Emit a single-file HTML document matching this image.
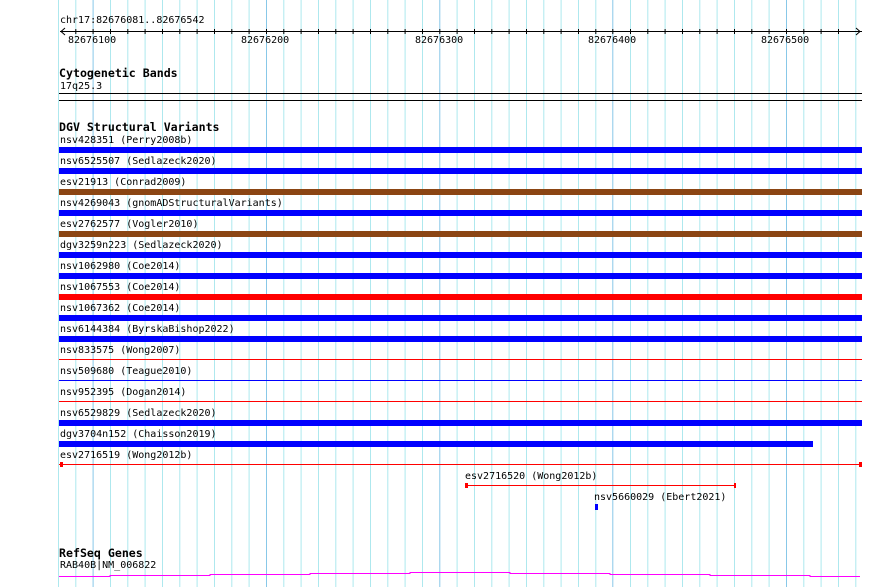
<!DOCTYPE html>
<html><head><meta charset="utf-8"><style>
*{margin:0;padding:0}
body{width:890px;height:587px;overflow:hidden;background:#fff;position:relative;font-family:"DejaVu Sans Mono","Liberation Mono",monospace;font-size:10px;color:#000}
.grid{position:absolute;left:0;top:0;width:890px;height:587px}
.t{position:absolute;white-space:pre;line-height:12px}
.b{position:absolute;font-weight:bold;font-size:11.6px;line-height:13px;white-space:pre}
.bar{position:absolute;left:59px;width:803px;height:6px}
.ln{position:absolute;left:59px;width:803px;height:1px}
</style></head><body>
<svg class="grid" width="890" height="587" style="position:absolute;left:0;top:0">
<g stroke="#aee8ee">
<line x1="58.5" y1="0" x2="58.5" y2="587"/><line x1="75.8" y1="0" x2="75.8" y2="587"/><line x1="110.5" y1="0" x2="110.5" y2="587"/><line x1="127.8" y1="0" x2="127.8" y2="587"/><line x1="145.1" y1="0" x2="145.1" y2="587"/><line x1="162.5" y1="0" x2="162.5" y2="587"/><line x1="179.8" y1="0" x2="179.8" y2="587"/><line x1="197.1" y1="0" x2="197.1" y2="587"/><line x1="214.5" y1="0" x2="214.5" y2="587"/><line x1="231.8" y1="0" x2="231.8" y2="587"/><line x1="249.1" y1="0" x2="249.1" y2="587"/><line x1="283.8" y1="0" x2="283.8" y2="587"/><line x1="301.1" y1="0" x2="301.1" y2="587"/><line x1="318.5" y1="0" x2="318.5" y2="587"/><line x1="335.8" y1="0" x2="335.8" y2="587"/><line x1="353.1" y1="0" x2="353.1" y2="587"/><line x1="370.5" y1="0" x2="370.5" y2="587"/><line x1="387.8" y1="0" x2="387.8" y2="587"/><line x1="405.1" y1="0" x2="405.1" y2="587"/><line x1="422.5" y1="0" x2="422.5" y2="587"/><line x1="457.1" y1="0" x2="457.1" y2="587"/><line x1="474.5" y1="0" x2="474.5" y2="587"/><line x1="491.8" y1="0" x2="491.8" y2="587"/><line x1="509.1" y1="0" x2="509.1" y2="587"/><line x1="526.5" y1="0" x2="526.5" y2="587"/><line x1="543.8" y1="0" x2="543.8" y2="587"/><line x1="561.1" y1="0" x2="561.1" y2="587"/><line x1="578.5" y1="0" x2="578.5" y2="587"/><line x1="595.8" y1="0" x2="595.8" y2="587"/><line x1="630.5" y1="0" x2="630.5" y2="587"/><line x1="647.8" y1="0" x2="647.8" y2="587"/><line x1="665.1" y1="0" x2="665.1" y2="587"/><line x1="682.5" y1="0" x2="682.5" y2="587"/><line x1="699.8" y1="0" x2="699.8" y2="587"/><line x1="717.1" y1="0" x2="717.1" y2="587"/><line x1="734.5" y1="0" x2="734.5" y2="587"/><line x1="751.8" y1="0" x2="751.8" y2="587"/><line x1="769.1" y1="0" x2="769.1" y2="587"/><line x1="803.8" y1="0" x2="803.8" y2="587"/><line x1="821.1" y1="0" x2="821.1" y2="587"/><line x1="838.5" y1="0" x2="838.5" y2="587"/><line x1="855.8" y1="0" x2="855.8" y2="587"/>
</g>
<g stroke="#88c8e8">
<line x1="93.1" y1="0" x2="93.1" y2="587"/><line x1="266.5" y1="0" x2="266.5" y2="587"/><line x1="439.8" y1="0" x2="439.8" y2="587"/><line x1="612.8" y1="0" x2="612.8" y2="587"/><line x1="786.5" y1="0" x2="786.5" y2="587"/>
</g>
<g stroke="#000" stroke-width="1">
<line x1="60" y1="31.5" x2="862" y2="31.5"/>
<polyline points="65,28 61,31.5 65,35" fill="none"/>
<polyline points="856,28 860,31.5 856,35" fill="none"/>
<line x1="75.8" y1="29" x2="75.8" y2="34"/><line x1="93.1" y1="29" x2="93.1" y2="34"/><line x1="110.5" y1="29" x2="110.5" y2="34"/><line x1="127.8" y1="29" x2="127.8" y2="34"/><line x1="145.1" y1="29" x2="145.1" y2="34"/><line x1="162.5" y1="29" x2="162.5" y2="34"/><line x1="179.8" y1="29" x2="179.8" y2="34"/><line x1="197.1" y1="29" x2="197.1" y2="34"/><line x1="214.5" y1="29" x2="214.5" y2="34"/><line x1="231.8" y1="29" x2="231.8" y2="34"/><line x1="249.1" y1="29" x2="249.1" y2="34"/><line x1="266.5" y1="29" x2="266.5" y2="34"/><line x1="283.8" y1="29" x2="283.8" y2="34"/><line x1="301.1" y1="29" x2="301.1" y2="34"/><line x1="318.5" y1="29" x2="318.5" y2="34"/><line x1="335.8" y1="29" x2="335.8" y2="34"/><line x1="353.1" y1="29" x2="353.1" y2="34"/><line x1="370.5" y1="29" x2="370.5" y2="34"/><line x1="387.8" y1="29" x2="387.8" y2="34"/><line x1="405.1" y1="29" x2="405.1" y2="34"/><line x1="422.5" y1="29" x2="422.5" y2="34"/><line x1="439.8" y1="29" x2="439.8" y2="34"/><line x1="457.1" y1="29" x2="457.1" y2="34"/><line x1="474.5" y1="29" x2="474.5" y2="34"/><line x1="491.8" y1="29" x2="491.8" y2="34"/><line x1="509.1" y1="29" x2="509.1" y2="34"/><line x1="526.5" y1="29" x2="526.5" y2="34"/><line x1="543.8" y1="29" x2="543.8" y2="34"/><line x1="561.1" y1="29" x2="561.1" y2="34"/><line x1="578.5" y1="29" x2="578.5" y2="34"/><line x1="595.8" y1="29" x2="595.8" y2="34"/><line x1="612.8" y1="29" x2="612.8" y2="34"/><line x1="630.5" y1="29" x2="630.5" y2="34"/><line x1="647.8" y1="29" x2="647.8" y2="34"/><line x1="665.1" y1="29" x2="665.1" y2="34"/><line x1="682.5" y1="29" x2="682.5" y2="34"/><line x1="699.8" y1="29" x2="699.8" y2="34"/><line x1="717.1" y1="29" x2="717.1" y2="34"/><line x1="734.5" y1="29" x2="734.5" y2="34"/><line x1="751.8" y1="29" x2="751.8" y2="34"/><line x1="769.1" y1="29" x2="769.1" y2="34"/><line x1="786.5" y1="29" x2="786.5" y2="34"/><line x1="803.8" y1="29" x2="803.8" y2="34"/><line x1="821.1" y1="29" x2="821.1" y2="34"/><line x1="838.5" y1="29" x2="838.5" y2="34"/>
<line x1="59" y1="93.5" x2="862" y2="93.5"/>
<line x1="59" y1="100.5" x2="862" y2="100.5"/>
</g>
<polyline fill="none" stroke="#f0f" stroke-width="1" points="59,576.5 110,576.5 110,575.5 210,575.5 210,574.5 310,574.5 310,573.5 410,573.5 410,572.5 510,572.5 510,573.5 610,573.5 610,574.5 710,574.5 710,575.5 810,575.5 810,576.5 860,576.5"/>
</svg>

<div class="t" style="left:60px;top:15px">chr17:82676081..82676542</div>
<div class="t" style="left:68px;top:35px">82676100</div>
<div class="t" style="left:241px;top:35px">82676200</div>
<div class="t" style="left:415px;top:35px">82676300</div>
<div class="t" style="left:588px;top:35px">82676400</div>
<div class="t" style="left:761px;top:35px">82676500</div>

<div class="b" style="left:59px;top:67px">Cytogenetic Bands</div>
<div class="t" style="left:60px;top:81px">17q25.3</div>

<div class="b" style="left:59px;top:121px">DGV Structural Variants</div>

<div class="t" style="left:60px;top:135px">nsv428351 (Perry2008b)</div><div class="bar" style="top:147px;background:#00f"></div>
<div class="t" style="left:60px;top:156px">nsv6525507 (Sedlazeck2020)</div><div class="bar" style="top:168px;background:#00f"></div>
<div class="t" style="left:60px;top:177px">esv21913 (Conrad2009)</div><div class="bar" style="top:189px;background:#8b4513"></div>
<div class="t" style="left:60px;top:198px">nsv4269043 (gnomADStructuralVariants)</div><div class="bar" style="top:210px;background:#00f"></div>
<div class="t" style="left:60px;top:219px">esv2762577 (Vogler2010)</div><div class="bar" style="top:231px;background:#8b4513"></div>
<div class="t" style="left:60px;top:240px">dgv3259n223 (Sedlazeck2020)</div><div class="bar" style="top:252px;background:#00f"></div>
<div class="t" style="left:60px;top:261px">nsv1062980 (Coe2014)</div><div class="bar" style="top:273px;background:#00f"></div>
<div class="t" style="left:60px;top:282px">nsv1067553 (Coe2014)</div><div class="bar" style="top:294px;background:#f00"></div>
<div class="t" style="left:60px;top:303px">nsv1067362 (Coe2014)</div><div class="bar" style="top:315px;background:#00f"></div>
<div class="t" style="left:60px;top:324px">nsv6144384 (ByrskaBishop2022)</div><div class="bar" style="top:336px;background:#00f"></div>
<div class="t" style="left:60px;top:345px">nsv833575 (Wong2007)</div><div class="ln" style="top:359px;background:#f00"></div>
<div class="t" style="left:60px;top:366px">nsv509680 (Teague2010)</div><div class="ln" style="top:380px;background:#00f"></div>
<div class="t" style="left:60px;top:387px">nsv952395 (Dogan2014)</div><div class="ln" style="top:401px;background:#f00"></div>
<div class="t" style="left:60px;top:408px">nsv6529829 (Sedlazeck2020)</div><div class="bar" style="top:420px;background:#00f"></div>
<div class="t" style="left:60px;top:429px">dgv3704n152 (Chaisson2019)</div><div class="bar" style="top:441px;background:#00f;width:754px"></div>
<div class="t" style="left:60px;top:450px">esv2716519 (Wong2012b)</div>
<div class="ln" style="top:464px;background:#f00"></div>
<div style="position:absolute;left:60px;top:462px;width:3px;height:5px;background:#f00"></div>
<div style="position:absolute;left:859px;top:462px;width:3px;height:5px;background:#f00"></div>

<div class="t" style="left:465px;top:471px">esv2716520 (Wong2012b)</div>
<div style="position:absolute;left:466px;top:485px;width:270px;height:1px;background:#f00"></div>
<div style="position:absolute;left:465px;top:483px;width:3px;height:5px;background:#f00"></div>
<div style="position:absolute;left:734px;top:483px;width:2px;height:5px;background:#f00"></div>

<div class="t" style="left:594px;top:492px">nsv5660029 (Ebert2021)</div>
<div style="position:absolute;left:595px;top:504px;width:3px;height:6px;background:#00f"></div>

<div class="b" style="left:59px;top:547px">RefSeq Genes</div>
<div class="t" style="left:60px;top:560px">RAB40B|NM_006822</div>
</body></html>
